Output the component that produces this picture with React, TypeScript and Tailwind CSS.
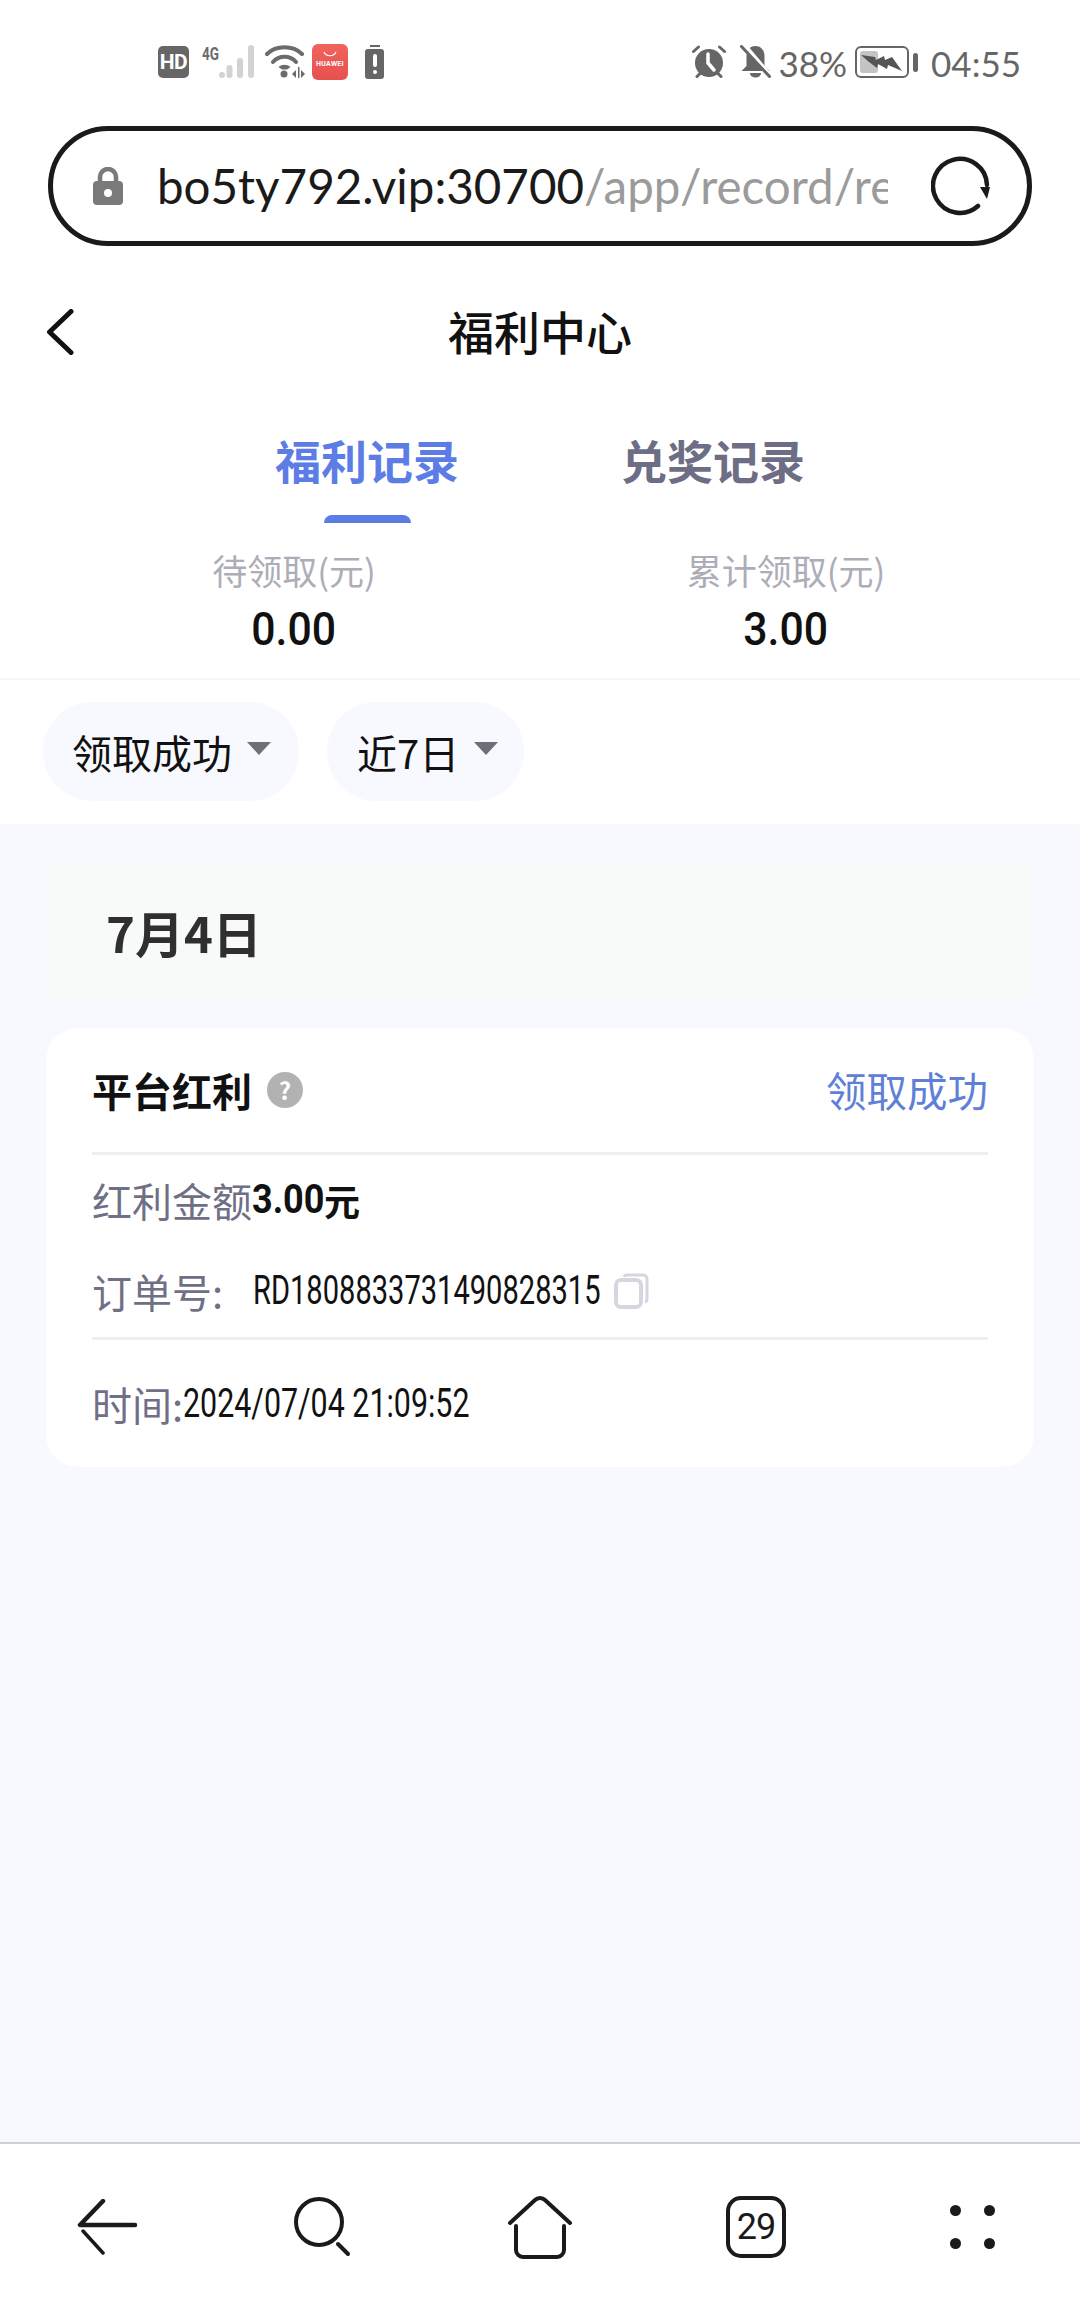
const cjk = { fontFamily: '"Noto Sans CJK SC", "Noto Sans", sans-serif' };

function Signal() {
  return (
    <svg width="53" height="34" viewBox="0 0 53 34" className="block overflow-visible">
      <text x="0" y="15" fontSize="18" fontWeight="700" fill="#6b6b6b" fontFamily="Roboto" textLength="17" lengthAdjust="spacingAndGlyphs">4G</text>
      <g fill="#d2d2d2">
        <rect x="17" y="27" width="6" height="6" rx="3" />
        <rect x="24.500" y="20" width="6" height="13" rx="3" />
        <rect x="35" y="13" width="6" height="20" rx="3" />
        <rect x="46" y="0" width="6" height="33" rx="3" />
      </g>
    </svg>
  );
}

function Wifi() {
  return (
    <svg width="40" height="33" viewBox="0 0 40 33" className="block">
      <g fill="none" stroke="#6b6b6b" strokeWidth="4" strokeLinecap="round">
        <path d="M2 9C11 0 28 0 37 9" />
        <path d="M8 17C14 10 25 10 31 17" />
      </g>
      <path d="M13.500 22C17 19 22 19 25.500 22L22 24.500H17Z" fill="#6b6b6b" />
      <circle cx="19" cy="29" r="3.500" fill="#6b6b6b" />
      <path d="M31 25l-4 4 4 4zM33 22h1.500v11H33zM36 25l4 4-4 4z" fill="#6b6b6b" />
    </svg>
  );
}

function Alarm() {
  return (
    <svg width="34" height="33" viewBox="0 0 34 33" className="block">
      <circle cx="17" cy="18" r="14" fill="#666" />
      <path d="M16 9v9l6 7" fill="none" stroke="#fff" strokeWidth="3.500" strokeLinecap="round" />
      <path d="M1.500 6.500L6.500 2M32.500 6.500L27.500 2M5 31.500l3-3M29 31.500l-3-3" stroke="#666" strokeWidth="3" strokeLinecap="round" />
    </svg>
  );
}

function BellOff() {
  return (
    <svg width="31" height="33" viewBox="0 0 31 33" className="block">
      <path d="M15.500 1c6 0 9 5 9 10v10l5 5H1.500l5-5V11c0-5 3-10 9-10z" fill="#666" />
      <path d="M10 28h11c0 6-11 6-11 0z" fill="#666" />
      <path d="M3 -1l28 33" stroke="#fff" strokeWidth="5" />
      <path d="M1.500 1.500l28 30" stroke="#666" strokeWidth="3" strokeLinecap="round" />
    </svg>
  );
}

function BatteryCharging() {
  return (
    <svg width="63" height="32" viewBox="0 0 63 32" className="block">
      <rect x="1" y="1" width="52" height="30" rx="5" fill="#fff" stroke="#666" strokeWidth="2" />
      <rect x="5" y="5" width="18" height="22" rx="3" fill="#c4c4c4" />
      <path d="M6 9l14 2 1 3 8-4 1 4 7-3 10 14-14-6-1 4-9-5-1 4-8-6z" fill="#555" />
      <rect x="58" y="7" width="5" height="19" rx="2.500" fill="#666" />
    </svg>
  );
}

function Reload() {
  return (
    <svg width="60" height="60" viewBox="0 0 60 60" className="block">
      <path d="M47 50A27 27 0 1 1 56 29" fill="none" stroke="#1a1a1a" strokeWidth="4.500" strokeLinecap="round" />
      <path d="M49 31h10l-3 12z" fill="#1a1a1a" />
    </svg>
  );
}

function Caret() {
  return (
    <svg width="24" height="13" viewBox="0 0 24 13" className="block shrink-0">
      <path d="M0 0h24L12 13z" fill="#6f6f78" />
    </svg>
  );
}

export default function App() {
  return (
    <div className="w-[1080px] h-[2310px] flex flex-col bg-white overflow-hidden" style={cjk}>
      {/* status bar */}
      <div className="h-[126px] shrink-0 flex justify-between pl-[158px] pr-[59px] pt-[45px]">
        <div className="flex items-start h-[40px]">
          <div className="w-[31px] h-[32px] mt-[1px] rounded-[5px] bg-[#666] flex items-center justify-center text-white text-[21px] leading-none font-bold font-['Roboto'] tracking-[-0.5px]">HD</div>
          <div className="ml-[13px]"><Signal /></div>
          <div className="ml-[10px]"><Wifi /></div>
          <div className="ml-[7px] w-[36px] h-[36px] mt-[-1px] rounded-[6px] bg-gradient-to-b from-[#f0645c] to-[#e6504f] flex flex-col items-center">
            <svg width="14" height="6" viewBox="0 0 14 6" className="mt-[7px] block">
              <path d="M1 1c2 5 10 5 12 0" fill="none" stroke="#fff" strokeWidth="1.200" />
            </svg>
            <span className="mt-[4px] text-white text-[7px] leading-none font-bold font-['Roboto'] tracking-[0.3px]">HUAWEI</span>
          </div>
          <div className="ml-[17px] w-[19px] flex flex-col items-center">
            <div className="w-[10px] h-[2px] bg-[#666]" />
            <div className="mt-[2px] w-[19px] h-[30px] rounded-[3px] bg-[#666] flex flex-col items-center justify-center">
              <div className="w-[4px] h-[13px] rounded-[2px] bg-white" />
              <div className="mt-[3px] w-[4px] h-[4px] rounded-full bg-white" />
            </div>
          </div>
        </div>
        <div className="flex items-start h-[40px] text-[#666] font-['Lato'] text-[35px] leading-[36px]">
          <Alarm />
          <div className="ml-[14px]"><BellOff /></div>
          <span className="ml-[7px]">38%</span>
          <div className="ml-[8px] mt-[1px]"><BatteryCharging /></div>
          <span className="ml-[13px]">04:55</span>
        </div>
      </div>

      {/* url bar */}
      <div className="flex items-center h-[120px] shrink-0 mx-[48px] border-[5px] border-[#1a1a1a] rounded-full pl-[40px] pr-[36px]">
        <svg width="30" height="38" viewBox="0 0 30 38" className="block shrink-0">
          <path d="M7 16v-6a8 8 0 0 1 16 0v6" fill="none" stroke="#7a7a7a" strokeWidth="4.500" />
          <rect x="0" y="14" width="30" height="24" rx="4" fill="#7a7a7a" />
          <circle cx="15" cy="26" r="4" fill="#fff" />
        </svg>
        <div className="ml-[34px] w-[731px] overflow-hidden whitespace-nowrap text-[47.5px] leading-[60px] font-['Lato']">
          <span className="text-[#1a1a1a]">bo5ty792.vip:30700</span>
          <span className="text-[#9b9b9b]">/app/record/re</span>
        </div>
        <div className="ml-auto"><Reload /></div>
      </div>

      {/* title */}
      <div className="relative h-[168px] shrink-0 flex items-center justify-center">
        <svg width="28" height="46" viewBox="0 0 28 46" className="absolute left-[46px] top-[63px]">
          <path d="M25 2.500L3.500 23 25 43.500" fill="none" stroke="#111" strokeWidth="5" strokeLinecap="round" strokeLinejoin="round" />
        </svg>
        <span className="text-[46px] leading-none font-medium text-[#111]">福利中心</span>
      </div>

      {/* tabs */}
      <div className="h-[96px] shrink-0 flex justify-center gap-[162px]">
        <span className="text-[46px] leading-[90px] font-bold text-[#5c7ce6]">福利记录</span>
        <span className="text-[46px] leading-[90px] font-bold text-[#6d6d85]">兑奖记录</span>
      </div>
      <div className="h-[13px] shrink-0 pt-[5px] pl-[324px]">
        <div className="w-[87px] h-[8px] rounded-t-[8px] bg-[#5c7ce6]" />
      </div>

      {/* stats */}
      <div className="h-[157px] shrink-0 px-[48px] grid grid-cols-2 border-b-2 border-[#f7f7f7]">
        <div className="flex flex-col items-center pt-[24px]">
          <span className="text-[35px] leading-[46px] text-[#adadb8]">待领取(元)</span>
          <span className="mt-[8px] text-[46px] leading-[56px] font-medium text-[#111] font-['Roboto'] scale-x-[0.93]">0.00</span>
        </div>
        <div className="flex flex-col items-center pt-[24px]">
          <span className="text-[35px] leading-[46px] text-[#adadb8]">累计领取(元)</span>
          <span className="mt-[8px] text-[46px] leading-[56px] font-medium text-[#111] font-['Roboto'] scale-x-[0.93]">3.00</span>
        </div>
      </div>

      {/* filters */}
      <div className="h-[144px] shrink-0 flex items-start pt-[22px] pl-[43px] gap-[28px]">
        <div className="w-[256px] h-[99px] rounded-[49px] bg-[#f8f9fe] flex items-center pl-[29px] gap-[15px]">
          <span className="text-[40px] leading-none text-[#111]">领取成功</span>
          <div className="mt-[-6px]"><Caret /></div>
        </div>
        <div className="w-[197px] h-[99px] rounded-[49px] bg-[#f8f9fe] flex items-center pl-[30px] gap-[15px]">
          <span className="text-[40px] leading-none text-[#111]">近7日</span>
          <div className="mt-[-6px]"><Caret /></div>
        </div>
      </div>

      {/* content */}
      <div className="flex-1 bg-[#f8f9fe] px-[46px] pt-[39px]">
        <div className="h-[137px] bg-[#f8f9f9] flex items-center pl-[60px] text-[49px] font-bold text-[#2f2f2f]">7月4日</div>
        <div className="mt-[28px] h-[439px] rounded-[32px] bg-white px-[46px] flex flex-col">
          <div className="h-[127px] shrink-0 flex items-center justify-between border-b-[3px] border-[#eeeeee]">
            <div className="flex items-center">
              <span className="text-[40px] leading-none font-bold text-[#111]">平台红利</span>
              <div className="ml-[15px] w-[36px] h-[36px] rounded-full bg-[#b2b2b2] flex items-center justify-center text-white text-[24px] leading-none font-bold">?</div>
            </div>
            <span className="text-[40.5px] leading-none text-[#5f80d8]">领取成功</span>
          </div>
          <div className="h-[90px] shrink-0 flex items-center text-[40px]">
            <span className="text-[#6f6f85]">红利金额</span>
            <span className="inline-block w-[72px] whitespace-nowrap origin-left scale-x-[0.9] font-bold text-[#111] font-['Roboto']">3.00</span>
            <span className="font-bold text-[#111] text-[36px]">元</span>
          </div>
          <div className="h-[92px] shrink-0 flex items-center">
            <span className="w-[161px] text-[40px] text-[#6f6f85]">订单号:</span>
            <span className="inline-block w-[348px] whitespace-nowrap origin-left scale-x-[0.727] text-[40px] text-[#111] font-['Roboto']">RD1808833731490828315</span>
            <svg width="36" height="36" viewBox="0 0 36 36" className="ml-[12px] block">
              <path d="M11 4a3 3 0 0 1 3-2h16a4 4 0 0 1 4 4v20a3 3 0 0 1-2 3" fill="none" stroke="#d6d6e0" strokeWidth="3" />
              <rect x="3" y="7" width="25" height="27" rx="5" fill="#fff" stroke="#d6d6e0" strokeWidth="4" />
            </svg>
          </div>
          <div className="h-[3px] shrink-0 bg-[#eeeeee]" />
          <div className="flex-1 flex items-center">
            <span className="text-[40px] text-[#6f6f85]">时间:</span>
            <span className="inline-block w-[286px] whitespace-nowrap origin-left scale-x-[0.76] text-[40px] text-[#111] font-['Roboto']">2024/07/04 21:09:52</span>
          </div>
        </div>
      </div>

      {/* bottom nav */}
      <div className="h-[168px] shrink-0 border-t-2 border-[#cfd0d6] bg-white grid grid-cols-5">
        <div className="flex items-center justify-center">
          <svg width="62" height="56" viewBox="0 0 62 56">
            <path d="M26 2L3 26h55" fill="none" stroke="#1a1a1a" strokeWidth="4.500" strokeLinecap="round" strokeLinejoin="round" />
            <path d="M6 32L26 54" fill="none" stroke="#1a1a1a" strokeWidth="3.500" strokeLinecap="round" />
          </svg>
        </div>
        <div className="flex items-center justify-center">
          <svg width="60" height="60" viewBox="0 0 60 60">
            <circle cx="25" cy="25" r="23" fill="none" stroke="#1a1a1a" strokeWidth="4" />
            <path d="M44 47L54 57" stroke="#1a1a1a" strokeWidth="4" strokeLinecap="round" />
          </svg>
        </div>
        <div className="flex items-center justify-center">
          <svg width="66" height="64" viewBox="0 0 66 64">
            <path d="M3 28L28 5a7 7 0 0 1 10 0L63 28" fill="none" stroke="#1a1a1a" strokeWidth="4" strokeLinecap="round" />
            <path d="M9 31v24a7 7 0 0 0 7 7h34a7 7 0 0 0 7-7V31" fill="none" stroke="#1a1a1a" strokeWidth="4" strokeLinecap="round" />
          </svg>
        </div>
        <div className="flex items-center justify-center">
          <div className="w-[60px] h-[62px] rounded-[15px] border-[4px] border-[#1a1a1a] flex items-center justify-center text-[36px] leading-none text-[#1a1a1a] font-['Roboto'] tracking-[-1px]">29</div>
        </div>
        <div className="flex items-center justify-center">
          <div className="grid grid-cols-2 gap-x-[23px] gap-y-[22px]">
            <div className="w-[11px] h-[11px] rounded-full bg-[#1a1a1a]" />
            <div className="w-[11px] h-[11px] rounded-full bg-[#1a1a1a]" />
            <div className="w-[11px] h-[11px] rounded-full bg-[#1a1a1a]" />
            <div className="w-[11px] h-[11px] rounded-full bg-[#1a1a1a]" />
          </div>
        </div>
      </div>
    </div>
  );
}
